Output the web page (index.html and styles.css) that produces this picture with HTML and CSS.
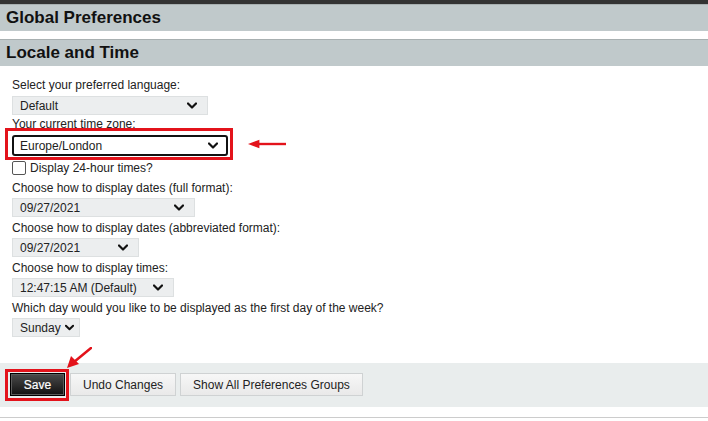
FILE: index.html
```html
<!DOCTYPE html>
<html>
<head>
<meta charset="utf-8">
<link rel="stylesheet" href="styles.css">
</head>
<body>
<div class="topbar"></div>
<div class="page-title">Global Preferences</div>
<div class="section-title">Locale and Time</div>
<div class="content">
  <div class="label">Select your preferred language:</div>
  <div class="select w-lang"><span>Default</span><svg class="chev" viewBox="0 0 10 6"><path d="M1 1 L5 5 L9 1" /></svg></div>
  <div class="label label-tz">Your current time zone:</div>
  <div class="tz-wrap">
    <div class="select focused w-tz"><span>Europe/London</span><svg class="chev" viewBox="0 0 10 6"><path d="M1 1 L5 5 L9 1" /></svg></div>
    <div class="hl hl-tz"></div>
    <svg class="arrow-left" viewBox="0 0 40 10"><path d="M40 5 L9 5" /><polygon points="0,5 12,0.5 12,9.5" /></svg>
  </div>
  <div class="check-row"><span class="checkbox"></span><span>Display 24-hour times?</span></div>
  <div class="label">Choose how to display dates (full format):</div>
  <div class="select w-full"><span>09/27/2021</span><svg class="chev" viewBox="0 0 10 6"><path d="M1 1 L5 5 L9 1" /></svg></div>
  <div class="label">Choose how to display dates (abbreviated format):</div>
  <div class="select w-abbr"><span>09/27/2021</span><svg class="chev" viewBox="0 0 10 6"><path d="M1 1 L5 5 L9 1" /></svg></div>
  <div class="label">Choose how to display times:</div>
  <div class="select w-time"><span>12:47:15 AM (Default)</span><svg class="chev" viewBox="0 0 10 6"><path d="M1 1 L5 5 L9 1" /></svg></div>
  <div class="label">Which day would you like to be displayed as the first day of the week?</div>
  <div class="select w-day"><span>Sunday</span><svg class="chev" viewBox="0 0 10 6"><path d="M1 1 L5 5 L9 1" /></svg></div>
</div>
<div class="footer">
  <div class="save-wrap">
    <button class="btn btn-dark">Save</button>
    <div class="hl hl-save"></div>
    <svg class="arrow-diag" viewBox="0 0 26 22"><path d="M25 1 L8 15" /><polygon points="1,21 5,9 13,17" /></svg>
  </div>
  <button class="btn">Undo Changes</button>
  <button class="btn">Show All Preferences Groups</button>
</div>
<div class="bottom-line"></div>
</body>
</html>
```
FILE: styles.css
```css
* { box-sizing: border-box; }
body {
  margin: 0;
  font-family: "Liberation Sans", Arial, sans-serif;
  font-size: 12px;
  color: #222;
  background: #fff;
}
.topbar { height: 4px; background: #333; }
.page-title, .section-title {
  height: 27px;
  background: #c0c9cb;
  border-top: 1px solid #a8b0b1;
  font-weight: bold;
  font-size: 17px;
  line-height: 25px;
  padding-left: 6px;
  color: #111;
}
.section-title { margin-top: 8px; }
.content {
  padding: 9px 0 0 12px;
  height: 297px;
}
.label { height: 21px; line-height: 20px; padding-top: 1px; }
.label:first-child { padding-top: 0; line-height: 21px; }
.label.label-tz { padding-top: 0; line-height: 19px; }
.select {
  height: 19px;
  background: #eceeef;
  border: 1px solid #dde0e1;
  display: flex;
  align-items: center;
  justify-content: space-between;
  padding: 0 10px 0 7px;
  color: #222;
}
.chev { width: 10px; height: 7px; flex-shrink: 0; }
.chev path { fill: none; stroke: #111; stroke-width: 2.2; stroke-linecap: round; stroke-linejoin: round; }
.w-lang { width: 196px; }
.w-tz { width: 216px; }
.w-full { width: 183px; }
.w-abbr { width: 127px; }
.w-time { width: 162px; }
.w-day { width: 68px; padding-right: 5px; }
.w-day .chev { width: 9px; }
.tz-wrap { position: relative; height: 19px; }
.select.focused {
  height: 21px;
  margin-top: -1px;
  background: #fff;
  border: 2px solid #111;
  border-radius: 3px;
  padding-left: 6px;
  padding-right: 8px;
}
.hl {
  position: absolute;
  border: 3px solid #e3131b;
}
.hl-tz { left: -7px; top: -7px; width: 228px; height: 32px; }
.arrow-left {
  position: absolute;
  left: 236px; top: 4px;
  width: 38px; height: 10px;
}
.arrow-left path { stroke: #e3131b; stroke-width: 2.5; }
.arrow-left polygon { fill: #e3131b; }
.check-row {
  height: 23px;
  display: flex;
  align-items: center;
  padding-top: 5px;
}
.checkbox {
  width: 14px; height: 14px;
  border: 1px solid #555;
  border-radius: 2px;
  background: #fff;
  margin-right: 4px;
}
.footer {
  height: 44px;
  background: #e9eded;
  display: flex;
  align-items: flex-start;
  padding: 10px 0 0 10px;
  gap: 4px;
}
.save-wrap { position: relative; margin-right: 1px; }
.btn {
  height: 23px;
  font-family: "Liberation Sans", Arial, sans-serif;
  font-size: 12px;
  color: #222;
  border: 1px solid #cfd2d3;
  background: linear-gradient(#f7f7f7, #e9e9e9);
  padding: 0 12px;
  border-radius: 0;
}
.btn-dark {
  width: 55px;
  color: #fff;
  border: 1px solid #000;
  box-shadow: inset 0 0 0 1px #5a5a5a;
  background: linear-gradient(#4a4a4a, #111);
  -webkit-text-stroke: 0.2px #fff;
}
.hl-save { left: -5px; top: -4px; width: 64px; height: 32px; }
.arrow-diag {
  position: absolute;
  left: 56px; top: -26px;
  width: 26px; height: 22px;
}
.arrow-diag path { stroke: #e3131b; stroke-width: 2.5; stroke-linecap: round; }
.arrow-diag polygon { fill: #e3131b; }
.bottom-line {
  margin-top: 10px;
  height: 1px;
  background: #ccc;
}
```
